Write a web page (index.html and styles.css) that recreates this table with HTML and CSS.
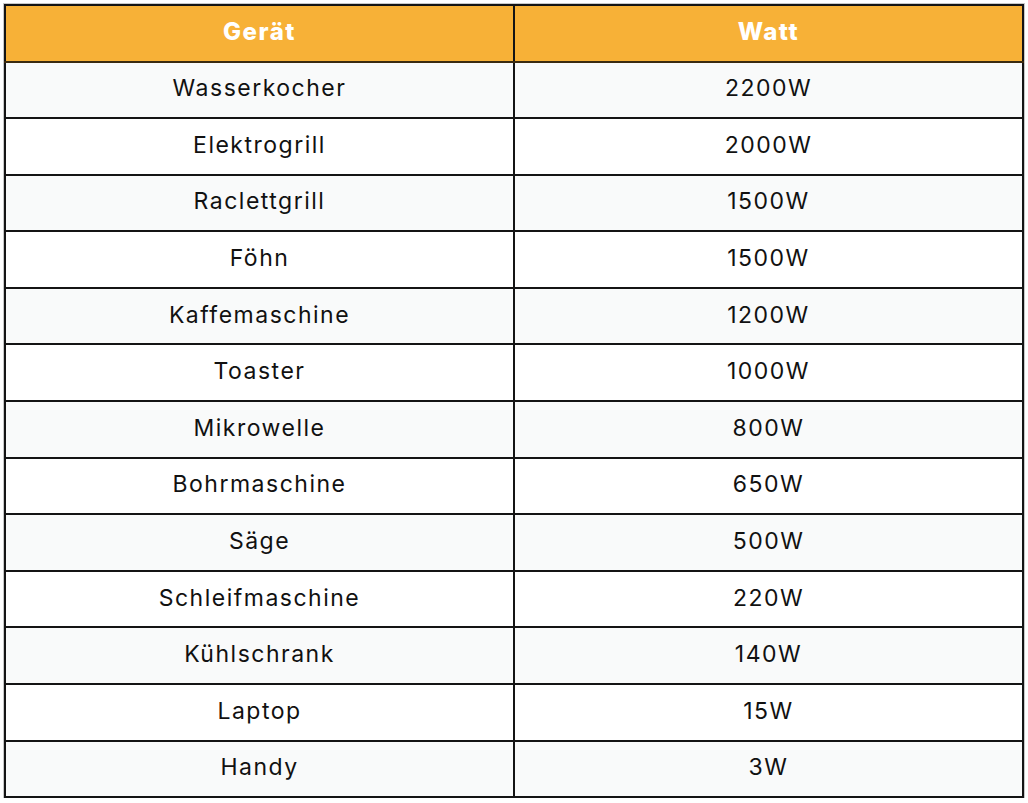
FILE: index.html
```html
<!DOCTYPE html>
<html lang="de">
<head>
<meta charset="utf-8">
<title>Geräte Watt</title>
<link rel="stylesheet" href="styles.css">
</head>
<body>
<table class="watt-table">
  <thead>
    <tr><th>Gerät</th><th>Watt</th></tr>
  </thead>
  <tbody>
    <tr><td>Wasserkocher</td><td>2200W</td></tr>
    <tr><td>Elektrogrill</td><td>2000W</td></tr>
    <tr><td>Raclettgrill</td><td>1500W</td></tr>
    <tr><td>Föhn</td><td>1500W</td></tr>
    <tr><td>Kaffemaschine</td><td>1200W</td></tr>
    <tr><td>Toaster</td><td>1000W</td></tr>
    <tr><td>Mikrowelle</td><td>800W</td></tr>
    <tr><td>Bohrmaschine</td><td>650W</td></tr>
    <tr><td>Säge</td><td>500W</td></tr>
    <tr><td>Schleifmaschine</td><td>220W</td></tr>
    <tr><td>Kühlschrank</td><td>140W</td></tr>
    <tr><td>Laptop</td><td>15W</td></tr>
    <tr><td>Handy</td><td>3W</td></tr>
  </tbody>
</table>
</body>
</html>
```
FILE: styles.css
```css
html, body {
  margin: 0;
  padding: 0;
  background: #ffffff;
}
body {
  padding: 4px 0 0 4px;
  font-family: Inter, "Open Sans", "Liberation Sans", sans-serif;
}
.watt-table {
  border-collapse: collapse;
  width: 1020px;
  table-layout: fixed;
  box-shadow: 0 0 0 1px #c8c8c8;
}
.watt-table thead tr {
  height: 56.5px;
}
.watt-table tbody tr {
  height: 56.6px;
}
.watt-table th,
.watt-table td {
  border: 2px solid #141414;
  text-align: center;
  vertical-align: middle;
  padding: 0 0 3px 0;
  width: 50%;
}
.watt-table th {
  background: #f7b137;
  color: #ffffff;
  font-weight: 800;
  font-size: 24px;
  letter-spacing: 1.5px;
  padding-bottom: 4px;
  border-bottom-color: #3a2a10;
}
.watt-table td {
  color: #111111;
  font-size: 23px;
  font-weight: 400;
  letter-spacing: 1.5px;
}
.watt-table tbody tr:nth-child(odd) td {
  background: #f9fafa;
}
.watt-table tbody tr:nth-child(even) td {
  background: #ffffff;
}
```
